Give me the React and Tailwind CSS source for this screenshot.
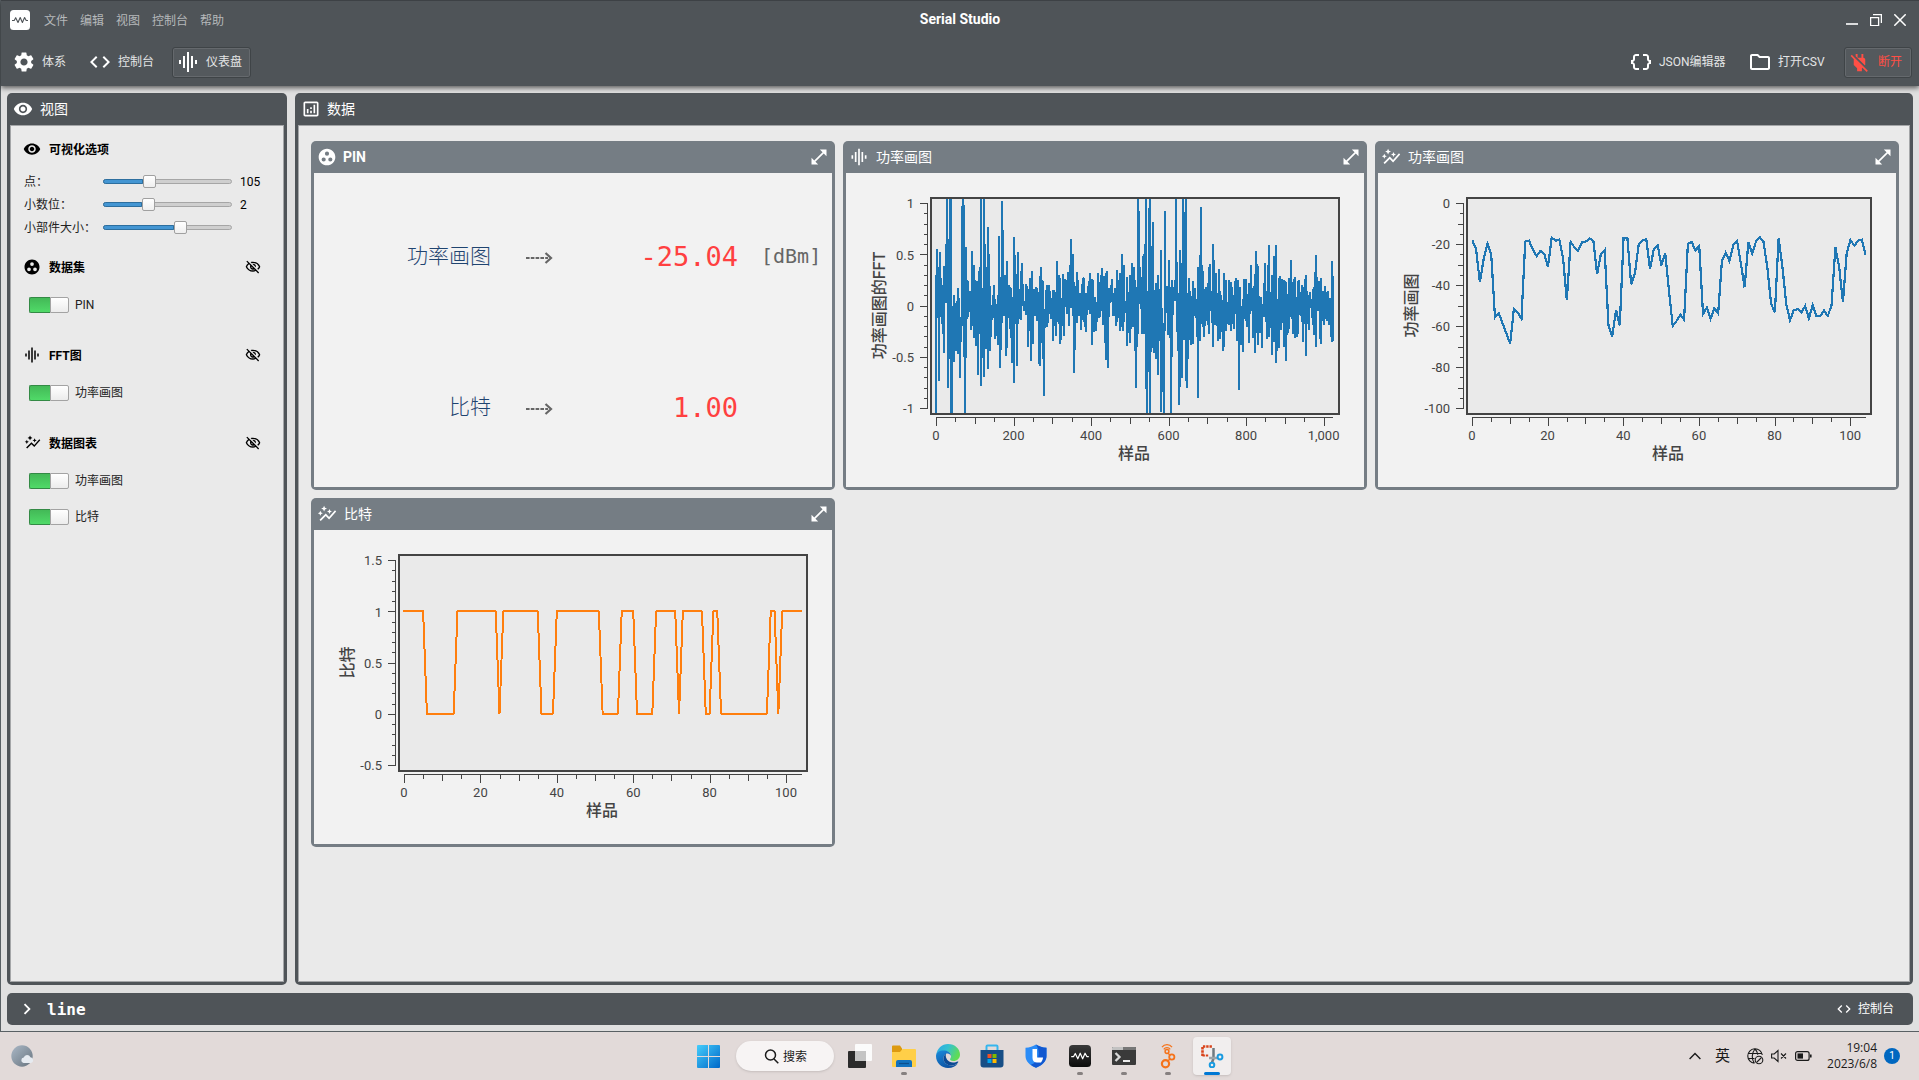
import React from "react";
import {
  MdVisibility,
  MdOutlineVisibilityOff,
  MdSettings,
  MdCode,
  MdDataObject,
  MdOutlineFolder,
  MdPowerOff,
  MdGroupWork,
  MdAutoGraph,
  MdGraphicEq,
  MdOutlineAnalytics,
  MdOpenInFull,
  MdChevronRight,
} from "react-icons/md";

const AXIS = "#444444";
const BLUE = "#1f77b4";
const ORANGE = "#ff7f0e";

/* Spectrum envelope: [x, y] steps, in thirds of a pixel */
const FFT_TOP_A = "30 255 33 177 39 231 42 186 48 264 51 285 54 228 60 162 63 26 69 147 72 26 81 348 84 315 90 339 93 333 96 294 102 324 105 381 108 48 111 26 117 45 120 171 126 270 129 273 132 303 138 183 144 225 150 270 153 273 159 243 162 231 165 26 171 294 174 26 180 162 183 231 186 111 192 192 195 288 198 345 201 315 204 285 210 327 213 342 216 315 219 138 225 261 228 33 234 120 237 255 243 213 249 285 255 291 258 294 261 321 264 141 270 195 273 252 276 186 282 297 285 243 288 219 294 282 297 333 300 282 306 288 309 297 312 264 318 243 324 297 330 291 336 294 339 306 342 258 345 231 351 270 354 273 357 357 360 300 363 285 375 303 378 324 381 300 390 306 393 213 399 255 405 264 408 324 411 252 417 267 423 270 426 246 432 225 435 147 441 192 447 276 450 288 453 246 459 270 462 309 468 282 471 264 474 261 477 264 480 309 486 288 489 273 492 249 498 267 504 270 507 321 513 336 516 249 522 276 525 255 528 234 534 258 540 249 543 243 549 294 555 285 558 267 564 309 567 294 573 240 579 270 582 249 588 192 594 225 600 333 603 261 609 306 612 255 618 219 624 231";
const FFT_TOP_B = "0 270 3 291 6 26 12 63 15 231 18 261 21 198 24 192 27 162 30 26 36 303 39 54 42 26 48 168 51 96 57 300 60 279 66 255 72 297 75 180 81 354 84 399 87 63 93 288 99 210 105 291 108 270 114 291 117 270 120 26 126 216 129 309 132 180 138 219 141 26 147 66 150 26 156 309 159 264 165 303 168 318 171 273 177 294 183 327 186 231 192 195 195 51 201 225 204 243 207 297 210 291 216 279 219 231 222 222 228 303 231 162 237 210 240 249 246 309 249 237 255 303 258 315 261 330 264 249 270 270 276 336 279 270 285 276 291 291 294 315 297 273 300 264 306 270 312 291 318 348 321 327 324 267 336 312 339 279 345 225 351 294 354 288 357 252 360 183 366 222 369 228 372 318 375 321 381 342 384 279 387 219 393 303 396 225 399 165 405 306 408 255 414 198 420 165 426 327 429 264 432 258 438 267 444 270 450 273 453 276 456 312 459 264 465 210 471 276 474 267 477 261 483 321 486 273 489 270 495 306 498 285 504 291 507 267 510 255 516 303 519 315 522 306 528 327 531 297 534 291 537 246 540 195 546 261 549 273 555 264 561 303 567 288 573 306 576 303 582 324 588 213 594 258";
const FFT_BOTTOM_A = "30 669 36 384 39 573 45 381 48 402 51 432 54 489 60 339 66 594 72 507 75 669 84 516 90 483 96 492 102 564 108 456 111 408 114 501 117 669 123 504 126 387 129 381 132 366 135 420 141 408 144 444 150 468 156 555 162 432 165 588 171 504 174 561 180 477 186 537 192 483 198 441 201 390 204 384 207 447 213 438 216 465 222 534 228 480 231 399 234 378 240 498 246 474 249 384 252 417 255 444 258 519 264 579 270 402 273 528 279 402 282 387 285 390 291 348 294 363 300 375 306 471 312 423 315 513 321 462 327 378 333 393 339 522 342 528 348 459 351 507 354 618 360 414 363 411 369 399 372 372 375 387 381 453 387 408 390 438 396 396 399 402 402 462 408 450 411 408 414 438 420 351 423 372 429 408 435 354 441 378 444 549 450 480 453 399 459 378 465 420 471 390 474 396 477 411 480 426 486 375 489 360 492 372 498 465 504 426 510 423 516 396 519 384 525 381 528 363 531 405 537 459 540 510 546 534 552 381 555 339 558 336 561 378 570 408 576 396 579 384 582 423 588 411 591 423 597 397 600 369 603 468 609 429 612 459 618 417 621 411 627 483";
const FFT_BOTTOM_B = "0 594 6 471 9 432 12 342 15 357 18 432 30 597 33 669 39 546 42 669 48 486 51 474 54 489 60 507 66 555 72 453 75 666 81 606 84 669 90 423 93 369 96 435 102 444 105 669 111 501 114 375 117 333 123 426 126 483 129 645 135 591 138 564 144 450 150 573 153 594 159 507 162 450 165 465 171 462 177 378 180 384 183 441 186 624 192 453 198 402 201 411 204 441 210 408 213 393 216 405 219 432 225 363 228 399 231 471 237 405 243 408 246 453 252 447 258 426 261 483 267 471 270 423 276 402 279 405 285 423 291 402 294 417 300 372 303 453 309 600 315 465 321 486 327 387 330 393 333 411 339 459 345 372 348 363 351 444 357 489 363 429 366 465 372 429 378 474 384 381 390 396 393 447 399 441 405 414 408 495 414 456 420 519 426 483 429 474 435 420 441 399 444 471 450 513 456 435 459 429 462 417 465 381 468 387 471 432 477 444 483 441 489 432 492 375 495 378 498 396 501 456 507 402 510 498 516 402 519 420 525 354 528 384 531 405 534 435 540 471 546 363 552 447 555 462 561 393 564 405 570 387 573 393 579 405 585 441 588 456 594 453";

function parseSteps(first, second) {
  const read = (text, shift) => {
    const n = text.split(" ").map(Number);
    const out = [];
    for (let i = 0; i < n.length; i += 2) out.push([n[i] + shift, n[i + 1]]);
    return out;
  };
  return [...read(first, 0), ...read(second, 630)];
}

function stepPoints(steps, end) {
  const pts = [];
  steps.forEach(([x, y], i) => {
    const next = i + 1 < steps.length ? steps[i + 1][0] : end;
    pts.push([x, y], [next, y]);
  });
  return pts;
}

const FFT_POINTS = [
  ...stepPoints(parseSteps(FFT_TOP_A, FFT_TOP_B), 1227),
  ...stepPoints(parseSteps(FFT_BOTTOM_A, FFT_BOTTOM_B), 1227).reverse(),
]
  .map(([x, y]) => `${(x / 3 + 79).toFixed(2)},${(y / 3 + 17).toFixed(2)}`)
  .join(" ");

const POWER = [
  331, 357, 457, 388, 341, 372, 562, 549, 580, 610, 640, 537, 547, 566, 335, 332, 358, 378, 363, 371, 411, 323, 332,
  329, 385, 511, 335, 352, 362, 337, 335, 326, 332, 433, 372, 360, 585, 620, 540, 586, 323, 323, 463, 430, 343, 332,
  327, 417, 357, 345, 406, 369, 482, 588, 573, 554, 569, 341, 336, 361, 347, 552, 533, 566, 535, 550, 393, 368, 393,
  345, 333, 400, 472, 336, 370, 335, 321, 336, 412, 521, 547, 325, 410, 522, 570, 541, 537, 548, 528, 565, 525, 558,
  558, 542, 558, 525, 352, 410, 517, 369, 330, 347, 332, 329, 374,
];
const POWER_POINTS = POWER.map((y, i) => `${(94.3 + i * 3.782).toFixed(2)},${(y / 3 - 43).toFixed(2)}`).join(" ");

const BIT_RUNS = [6, 8, 11, 1, 10, 4, 12, 5, 4, 5, 6, 1, 6, 2, 2, 13, 2, 1, 6];
const BIT_POINTS = BIT_RUNS.flatMap((n, i) => Array(n).fill(i % 2 === 0 ? 81 : 184))
  .map((y, i) => `${(90 + i * 3.82).toFixed(2)},${y}`)
  .join(" ");

function Chart({ box, axisX, x0, xUnit, xMax, xStep, xLabels, yLabels, yDiv, xTitle, xTitleX, yTitle, yTitleX, children }) {
  const top = 30.5;
  const span = 205;
  const yGap = span / (yLabels.length - 1);
  const xTicks = [];
  for (let i = 0; i * (xStep / 4) <= xMax; i++) xTicks.push(i);
  const yTicks = [];
  for (let i = 0; i <= (yLabels.length - 1) * yDiv; i++) yTicks.push(i);
  const [left, right] = box;
  return (
    <svg width="518" height="314" viewBox="0 0 518 314" className="block font-[Roboto,'Noto_Sans_CJK_SC',sans-serif]">
      <rect x={left + 1} y="25" width={right - left - 2} height="216" fill="#eaeaea" stroke={AXIS} strokeWidth="2" />
      <g shapeRendering="crispEdges">{children}</g>
      <g stroke={AXIS} strokeWidth="1" shapeRendering="crispEdges">
        <line x1={axisX} x2={axisX} y1={top - 0.5} y2={top + span + 0.5} />
        {yTicks.map((i) => {
          const y = Math.floor(top + (i * yGap) / yDiv) + 0.5;
          const len = i % yDiv === 0 ? 8 : yDiv === 4 && i % 2 === 0 ? 6 : 4;
          return <line key={i} x1={axisX - len} x2={axisX} y1={y} y2={y} />;
        })}
        <line x1={x0 - 0.5} x2={x0 + xMax * xUnit} y1="244.5" y2="244.5" />
        {xTicks.map((i) => {
          const x = Math.floor(x0 + i * (xStep / 4) * xUnit) + 0.5;
          const len = i % 4 === 0 ? 8.5 : i % 2 === 0 ? 6.5 : 4.5;
          return <line key={i} x1={x} x2={x} y1="244.5" y2={244.5 + len} />;
        })}
      </g>
      <g fill={AXIS} fontSize="13">
        {yLabels.map((t, i) => (
          <text key={t} x={axisX - 13.5} y={top + i * yGap + 4.8} textAnchor="end">
            {t}
          </text>
        ))}
        {xLabels.map((t, i) => (
          <text key={t} x={x0 - 0.5 + i * xStep * xUnit} y="267.3" textAnchor="middle">
            {t}
          </text>
        ))}
      </g>
      <g fill={AXIS} fontSize="16" fontWeight="500" textAnchor="middle">
        <text x={xTitleX} y="286">
          {xTitle}
        </text>
        <text transform={`translate(${yTitleX + 6} 132.500) rotate(-90)`}>{yTitle}</text>
      </g>
    </svg>
  );
}

function Widget({ icon, title, bold, children }) {
  return (
    <section className="flex h-[349px] w-[524px] flex-col rounded-[5px] bg-[#757d84] px-[3px] pb-[3px]">
      <header className="flex h-8 shrink-0 items-center pr-[3px] pl-[3px] text-white">
        <span className="flex w-5 justify-center">{icon}</span>
        <span
          className={
            bold ? "ml-[6px] flex-1 text-[14px] leading-none font-bold" : "ml-[7px] flex-1 text-[14px] leading-none"
          }
        >
          {title}
        </span>
        <MdOpenInFull size={20} />
      </header>
      <div className="flex-1 bg-[#f2f2f2]">{children}</div>
    </section>
  );
}

function DatasetRow({ name, value, unit }) {
  return (
    <div className="flex h-[151px] items-center leading-none">
      <span className="mt-px w-[177px] text-right text-[21px] font-light whitespace-nowrap text-[#1f4470]">{name}</span>
      <svg width="28" height="14" viewBox="0 0 28 14" className="mt-[4px] ml-[34px]" fill="none" stroke="#666">
        <path d="M1 7h22" strokeWidth="2" strokeDasharray="3.600 1.200" />
        <path d="M20.500 2l5.500 5-5.500 5" strokeWidth="2.200" />
      </svg>
      <span className="mt-px w-[185px] text-right font-['DejaVu_Sans_Mono',monospace] text-[27px] text-[#ff4040]">{value}</span>
      <span className="ml-[23px] font-['DejaVu_Sans_Mono',monospace] text-[20px] text-[#666]">{unit}</span>
    </div>
  );
}

function Slider({ label, fill, value }) {
  return (
    <div className="flex h-[23px] items-center text-[12px] leading-none text-[#222]">
      <span className="w-[79px] whitespace-nowrap">{label}</span>
      <div className="relative flex h-[5px] w-[129px] rounded-sm border border-[#a6a6a6] bg-[#cfcfcf]">
        <div className="-m-px h-[5px] rounded-l-sm border border-[#2d6f9f] bg-[#4496d3]" style={{ width: fill }} />
        <div
          className="absolute -top-[5px] h-[13px] w-[13px] rounded-[2px] border border-[#a0a0a0] bg-gradient-to-b from-white to-[#efefef]"
          style={{ left: fill - 1 }}
        />
      </div>
      <span className="ml-2 text-black">{value}</span>
    </div>
  );
}

function SideHeader({ icon, title }) {
  return (
    <div className="flex h-[41px] items-center text-black">
      <span className="flex w-4 justify-center">{icon}</span>
      <span className="mt-[2px] ml-[9px] flex-1 text-[12px] leading-none font-bold">{title}</span>
      <MdOutlineVisibilityOff size={16} className="mr-[22px]" />
    </div>
  );
}

function Toggle({ label }) {
  return (
    <div className="flex h-9 items-center pl-[5px]">
      <div className="flex h-4 w-10">
        <div className="w-[21px] rounded-l-[2px] border border-r-0 border-[#338a45] bg-gradient-to-b from-[#43b957] to-[#50da68]" />
        <div className="w-[19px] rounded-r-[2px] border border-[#a3a3a3] bg-gradient-to-b from-white to-[#ececec]" />
      </div>
      <span className="ml-[6px] text-[12px] leading-none text-[#222]">{label}</span>
    </div>
  );
}

function WaveLogo({ size, dark }) {
  return (
    <svg width={size} height={size} viewBox="0 0 20 20">
      <defs>
        <linearGradient id="logoDark" x1="0" y1="0" x2="0" y2="1">
          <stop offset="0" stopColor="#3a3a3a" />
          <stop offset="1" stopColor="#0c0c0c" />
        </linearGradient>
      </defs>
      <rect width="20" height="20" rx="3.500" fill={dark ? "url(#logoDark)" : "#ffffff"} />
      <path
        d="M2 10.500h2.200l1.500-2.800 2.300 4.800 2.200-5 2.200 5 2.200-5 1.600 3H18"
        fill="none"
        stroke={dark ? "#ffffff" : "#4f5458"}
        strokeWidth="1.100"
        strokeLinejoin="round"
      />
    </svg>
  );
}

function TaskSlot({ children, running, active }) {
  return (
    <div className="flex w-11 justify-center">
      <div
        className={
          active
            ? "relative flex h-[38px] w-[38px] items-center justify-center rounded bg-[#f1eeee] shadow-sm"
            : "relative flex h-[38px] w-[38px] items-center justify-center"
        }
      >
        {children}
        {running && <span className="absolute bottom-0 left-4 h-[3px] w-[6px] rounded-full bg-[#868080]" />}
        {active && <span className="absolute bottom-0 left-[11px] h-[3px] w-4 rounded-full bg-[#0078d4]" />}
      </div>
    </div>
  );
}

function StartIcon() {
  return (
    <svg width="23" height="23" viewBox="0 0 23 23">
      <defs>
        <linearGradient id="win" x1="0" y1="0" x2="1" y2="1">
          <stop offset="0" stopColor="#45cdfb" />
          <stop offset="1" stopColor="#0067c8" />
        </linearGradient>
      </defs>
      <path d="M1 0h10v11H0V1a1 1 0 0 1 1-1zM12 0h10a1 1 0 0 1 1 1v10H12zM0 12h11v11H1a1 1 0 0 1-1-1zM12 12h11v10a1 1 0 0 1-1 1H12z" fill="url(#win)" />
    </svg>
  );
}

function TaskViewIcon() {
  return (
    <svg width="24" height="24" viewBox="0 0 24 24">
      <rect x="7" y="0" width="17" height="17" rx="1" fill="#fbfbfb" />
      <rect x="0" y="7" width="18" height="17" rx="1" fill="#2b2b2b" />
      <path d="M7 7h11v10H7z" fill="#c4c4c4" />
    </svg>
  );
}

function ExplorerIcon() {
  return (
    <svg width="24" height="24" viewBox="0 0 24 24">
      <path d="M0 2.500A1 1 0 0 1 1 1.500h7l2 3v4H0z" fill="#dd9a10" />
      <path d="M0 8h8l2.500-3H23a1 1 0 0 1 1 1v16a1 1 0 0 1-1 1H1a1 1 0 0 1-1-1z" fill="#ffcf48" />
      <path d="M4 23v-5a2 2 0 0 1 2-2h12a2 2 0 0 1 2 2v5z" fill="#1272bf" />
      <path d="M7 19.500h10" stroke="#0b4f8e" strokeWidth="1.300" />
    </svg>
  );
}

function EdgeIcon() {
  return (
    <svg width="24" height="24" viewBox="0 0 24 24">
      <defs>
        <linearGradient id="edgeTop" x1="0" y1="0" x2="1" y2="0.400">
          <stop offset="0" stopColor="#2aa5e8" />
          <stop offset="0.500" stopColor="#35c1d0" />
          <stop offset="1" stopColor="#5fdc55" />
        </linearGradient>
        <linearGradient id="edgeBody" x1="0" y1="0" x2="0.600" y2="1">
          <stop offset="0" stopColor="#1b8bdc" />
          <stop offset="1" stopColor="#0c50a0" />
        </linearGradient>
      </defs>
      <path d="M0.200 11C1 4.500 6 0 12 0c7 0 12 5 12 10.500 0 4-3 6.500-6.500 6.500-3 0-4-1.200-3.200-2.500.700-1 .700-1.800.700-2.500 0-3-3-5-6.500-5C4.500 7 1 9 .200 11z" fill="url(#edgeTop)" />
      <path d="M0 12c0-3.500 3.500-5.500 7.500-5.500 4 0 7.500 2 7.500 5.500C14.500 10.500 13 9.500 11.500 9.500 9 9.500 7.500 12 7.500 14.500c0 4 3.500 7 8 7 2.200 0 4.500-.8 6.500-2.300C20 22 16.500 24 12 24 5.400 24 0 18.600 0 12z" fill="url(#edgeBody)" />
      <path d="M7.500 14.500c0-2 1-3.800 2.500-4.700C8.800 14 12 18.500 17 18.500c2 0 3.500-.5 4.700-1 .5-.2.800.3.500.8C20.500 20.500 18 21.500 15.500 21.500c-4.500 0-8-3-8-7z" fill="#0b4a94" />
    </svg>
  );
}

function StoreIcon() {
  return (
    <svg width="24" height="24" viewBox="0 0 24 24">
      <path d="M6.500 6V2.500a1 1 0 0 1 1-1h9a1 1 0 0 1 1 1V6" fill="none" stroke="#35b5ee" strokeWidth="2" />
      <path d="M.5 6h23v14.500a3 3 0 0 1-3 3h-17a3 3 0 0 1-3-3z" fill="#174e86" />
      <path d="M7.500 10h4v4h-4z" fill="#f25022" />
      <path d="M12.500 10h4v4h-4z" fill="#7fba00" />
      <path d="M7.500 15h4v4h-4z" fill="#00a4ef" />
      <path d="M12.500 15h4v4h-4z" fill="#ffb900" />
    </svg>
  );
}

function ShieldIcon() {
  return (
    <svg width="22" height="24" viewBox="0 0 22 24">
      <path d="M11 0.500c3 2 6.500 3 10.500 3.200V12c0 5.500-4.500 9.500-10.500 11.800C5 21.500.5 17.500.5 12V3.700C4.500 3.500 8 2.500 11 .5z" fill="#2b8cf7" />
      <path d="M11 .5c3 2 6.500 3 10.500 3.200V12c0 5.500-4.500 9.500-10.500 11.800-2-.8-3.800-1.800-5.200-3C14 18 16 8 11 .5z" fill="#1258d0" />
      <path d="M7.500 5v9c0 3 2 4.500 4.500 4.500h4c1.500-2 2-4 2-5H12V5z" fill="#ffffff" />
    </svg>
  );
}

function TerminalIcon() {
  return (
    <svg width="24" height="20" viewBox="0 0 24 20">
      <rect x="0" y="1" width="24" height="18" rx="1" fill="#3a3a3a" />
      <path d="M0 2a1 1 0 0 1 1-1h10v3H0z" fill="#c2c2c2" />
      <path d="M11 1h12a1 1 0 0 1 1 1v2H11z" fill="#777777" />
      <path d="M3.500 7l4 4-4 4" fill="none" stroke="#d9d9d9" strokeWidth="2.300" />
      <path d="M11 15h7" stroke="#ffffff" strokeWidth="1.800" />
    </svg>
  );
}

function NodesIcon() {
  return (
    <svg width="16" height="26" viewBox="0 0 16 26" fill="none" stroke="#f5731b">
      <path d="M2 4.200c2.500-3.500 7.500-3.500 10 0M3.800 6.300c1.500-2.200 4.900-2.200 6.400 0" strokeWidth="1.300" />
      <circle cx="7" cy="8.500" r="1.900" strokeWidth="1.500" />
      <circle cx="11.800" cy="14" r="2.600" strokeWidth="1.800" />
      <circle cx="5.500" cy="20.800" r="3.600" strokeWidth="2.200" />
      <path d="M8 10.200l2.200 2M9.900 16l-2 2" strokeWidth="1.500" />
    </svg>
  );
}

function SnipIcon() {
  return (
    <svg width="24" height="24" viewBox="0 0 24 24" fill="none">
      <path d="M2.500 12V2.500H12" stroke="#d9431a" strokeWidth="2.600" strokeDasharray="2.400 0.900" />
      <path d="M2.500 11.500H9" stroke="#d9431a" strokeWidth="2.200" strokeDasharray="2.400 0.900" />
      <path d="M13.500 4v10.500l-1.500 4" stroke="#6f7a80" strokeWidth="2.500" />
      <path d="M9 14h8.500" stroke="#9ba3a8" strokeWidth="2.500" />
      <circle cx="20" cy="13" r="2.400" stroke="#1a9be0" strokeWidth="2" />
      <circle cx="12" cy="21" r="2.300" stroke="#1a9be0" strokeWidth="2" />
    </svg>
  );
}

function WeatherIcon() {
  return (
    <svg width="24" height="24" viewBox="0 0 24 24">
      <defs>
        <linearGradient id="moon" x1="0" y1="0" x2="1" y2="1">
          <stop offset="0" stopColor="#aab8c6" />
          <stop offset="1" stopColor="#68747f" />
        </linearGradient>
      </defs>
      <circle cx="11" cy="12" r="10.700" fill="url(#moon)" />
      <path d="M12.500 19a2.800 2.800 0 0 1 .2-5.500 3.600 3.600 0 0 1 6.700-.2A2.900 2.900 0 0 1 20 19z" fill="#e6ebf1" />
    </svg>
  );
}

export default function App() {
  return (
    <div className="flex h-[1080px] w-[1919px] flex-col overflow-hidden bg-[#e0e0e0] font-[Roboto,'Noto_Sans_CJK_SC',sans-serif]">
      <div className="flex h-[1032px] flex-col border-b border-l border-[#596064]">
        <header className="z-10 flex h-[86px] shrink-0 flex-col border-t border-[#3d4145] bg-[#4f5458] shadow-[0_2px_5px_rgba(0,0,0,0.6)]">
          <div className="grid h-[37px] grid-cols-3 items-center">
            <div className="flex items-center pl-[9px]">
              <WaveLogo size={20} />
              <nav className="mt-[2px] ml-[14px] flex gap-3 text-[12px] leading-none text-[#b5b8ba]">
                <span>文件</span>
                <span>编辑</span>
                <span>视图</span>
                <span>控制台</span>
                <span>帮助</span>
              </nav>
            </div>
            <h1 className="-mt-[2px] text-center text-[14px] leading-none font-bold text-white">Serial Studio</h1>
            <div className="flex justify-end gap-3 pr-[13px]">
              <svg width="12" height="12" viewBox="0 0 12 12" stroke="#fff" fill="none">
                <path d="M0 10h12" strokeWidth="1.600" />
              </svg>
              <svg width="12" height="12" viewBox="0 0 12 12" stroke="#fff" fill="none">
                <path d="M.6 3.600h8v8h-8zM3 .6h8.400V9" strokeWidth="1.300" />
              </svg>
              <svg width="12" height="12" viewBox="0 0 12 12" stroke="#fff" fill="none">
                <path d="M.3.300l11.400 11.400M11.700.300L.3 11.700" strokeWidth="1.500" />
              </svg>
            </div>
          </div>
          <div className="flex h-[48px] items-center text-[12px] leading-none text-[#e4e5e6]">
            <div className="flex items-center pl-[11px]">
              <MdSettings size={24} color="#fff" />
              <span className="ml-[6px]">体系</span>
            </div>
            <div className="flex items-center pl-[22px]">
              <MdCode size={24} color="#fff" />
              <span className="ml-[6px]">控制台</span>
            </div>
            <div className="ml-[18px] flex h-[31px] w-[79px] items-center rounded-[3px] border border-[#3f4447] bg-[#54595d] pl-[3px] shadow-[inset_0_0_0_1px_#65696d]">
              <MdGraphicEq size={24} color="#fff" className="shrink-0" />
              <span className="ml-[6px] whitespace-nowrap">仪表盘</span>
            </div>
            <div className="flex-1" />
            <div className="flex w-[119px] items-center">
              <MdDataObject size={24} color="#fff" />
              <span className="ml-[6px]">JSON编辑器</span>
            </div>
            <div className="flex w-[96px] items-center">
              <MdOutlineFolder size={24} color="#fff" />
              <span className="ml-[6px]">打开CSV</span>
            </div>
            <div className="mr-[7px] flex h-[31px] w-[68px] items-center rounded-[3px] border border-[#3f4447] bg-[#54595d] pl-[3px] text-[#ff4f45] shadow-[inset_0_0_0_1px_#65696d]">
              <MdPowerOff size={23} />
              <span className="ml-[7px]">断开</span>
            </div>
          </div>
        </header>

        <main className="mt-[7px] flex h-[892px] gap-2 px-[6px]">
          <aside className="flex w-[280px] flex-col rounded-[5px] bg-[#4f5458] px-[3px] pb-[3px]">
            <header className="flex h-8 shrink-0 items-center pl-[3px] text-white">
              <MdVisibility size={20} />
              <span className="ml-[7px] text-[14px] leading-none">视图</span>
            </header>
            <div className="flex-1 border border-[#a4a6a8] bg-[#eaeaea] pl-[13px]">
              <div className="flex h-[44px] items-center pt-[2px] text-black">
                <MdVisibility size={18} className="-ml-px" />
                <span className="mt-px ml-[8px] text-[12px] leading-none font-bold">可视化选项</span>
              </div>
              <div>
                <Slider label="点：" fill={40} value="105" />
                <Slider label="小数位：" fill={39} value="2" />
                <Slider label="小部件大小：" fill={71} value="" />
              </div>
              <div className="mt-[7px]">
                <SideHeader icon={<MdGroupWork size={18} className="shrink-0" />} title="数据集" />
                <Toggle label="PIN" />
              </div>
              <div className="mt-[11px]">
                <SideHeader icon={<MdGraphicEq size={18} className="shrink-0" />} title="FFT图" />
                <Toggle label="功率画图" />
              </div>
              <div className="mt-[11px]">
                <SideHeader icon={<MdAutoGraph size={17} className="shrink-0" />} title="数据图表" />
                <Toggle label="功率画图" />
                <Toggle label="比特" />
              </div>
            </div>
          </aside>

          <section className="flex w-[1618px] flex-col rounded-[5px] bg-[#4f5458] px-[3px] pb-[3px]">
            <header className="flex h-8 shrink-0 items-center pl-[3px] text-white">
              <MdOutlineAnalytics size={20} />
              <span className="ml-[6px] text-[14px] leading-none">数据</span>
            </header>
            <div className="flex flex-1 flex-wrap content-start gap-2 border border-[#a4a6a8] bg-[#eaeaea] pt-[15px] pl-[12px]">
              <Widget icon={<MdGroupWork size={20} />} title="PIN" bold>
                <div className="pt-[7px]">
                  <DatasetRow name="功率画图" value="-25.04" unit="[dBm]" />
                  <DatasetRow name="比特" value="1.00" unit="" />
                </div>
              </Widget>
              <Widget icon={<MdGraphicEq size={20} />} title="功率画图">
                <Chart
                  box={[84, 494]}
                  axisX={81.5}
                  x0={90.5}
                  xUnit={0.3876}
                  xMax={1024}
                  xStep={200}
                  xLabels={["0", "200", "400", "600", "800", "1,000"]}
                  yLabels={["1", "0.5", "0", "-0.5", "-1"]}
                  yDiv={5}
                  xTitle="样品"
                  xTitleX={288}
                  yTitle="功率画图的FFT"
                  yTitleX={33}
                >
                  <polygon points={FFT_POINTS} fill={BLUE} />
                </Chart>
              </Widget>
              <Widget icon={<MdAutoGraph size={20} />} title="功率画图">
                <Chart
                  box={[88, 494]}
                  axisX={85.5}
                  x0={94.5}
                  xUnit={3.782}
                  xMax={104}
                  xStep={20}
                  xLabels={["0", "20", "40", "60", "80", "100"]}
                  yLabels={["0", "-20", "-40", "-60", "-80", "-100"]}
                  yDiv={4}
                  xTitle="样品"
                  xTitleX={290}
                  yTitle="功率画图"
                  yTitleX={33}
                >
                  <polyline points={POWER_POINTS} fill="none" stroke={BLUE} strokeWidth="2.2" />
                </Chart>
              </Widget>
              <Widget icon={<MdAutoGraph size={20} />} title="比特">
                <Chart
                  box={[84, 494]}
                  axisX={81.5}
                  x0={90.5}
                  xUnit={3.82}
                  xMax={104}
                  xStep={20}
                  xLabels={["0", "20", "40", "60", "80", "100"]}
                  yLabels={["1.5", "1", "0.5", "0", "-0.5"]}
                  yDiv={5}
                  xTitle="样品"
                  xTitleX={288}
                  yTitle="比特"
                  yTitleX={33}
                >
                  <polyline
                    points={BIT_POINTS}
                    fill="none"
                    stroke={ORANGE}
                    strokeWidth="2"
                    strokeLinejoin="bevel"
                    strokeLinecap="square"
                  />
                </Chart>
              </Widget>
            </div>
          </section>
        </main>

        <footer className="mx-[6px] mt-2 flex h-8 w-[1906px] items-center rounded-[5px] bg-[#4f5458] pr-[19px] pl-[9px] text-white">
          <MdChevronRight size={22} />
          <span className="mt-px ml-[9px] flex-1 font-['DejaVu_Sans_Mono',monospace] text-[16px] leading-none font-bold">line</span>
          <MdCode size={16} />
          <span className="ml-[6px] text-[12px] leading-none">控制台</span>
        </footer>
      </div>

      <div className="flex h-12 items-center bg-[#e2dad9] text-[#1b1b1b]">
        <div className="w-[686px] pl-[11px]">
          <WeatherIcon />
        </div>
        <TaskSlot>
          <StartIcon />
        </TaskSlot>
        <div className="ml-[6px] flex h-[30px] w-[98px] items-center rounded-full bg-[#f7f4f4] pl-[28px] shadow-sm">
          <svg width="15" height="15" viewBox="0 0 15 15" fill="none" stroke="#1b1b1b" strokeWidth="1.500">
            <circle cx="6.500" cy="6" r="5" />
            <path d="M10 10l4.300 4.300" />
          </svg>
          <span className="mt-px ml-[4px] text-[12px] leading-none">搜索</span>
        </div>
        <div className="ml-1 flex">
          <TaskSlot>
            <TaskViewIcon />
          </TaskSlot>
          <TaskSlot running>
            <ExplorerIcon />
          </TaskSlot>
          <TaskSlot>
            <EdgeIcon />
          </TaskSlot>
          <TaskSlot>
            <StoreIcon />
          </TaskSlot>
          <TaskSlot>
            <ShieldIcon />
          </TaskSlot>
          <TaskSlot running>
            <WaveLogo size={22} dark />
          </TaskSlot>
          <TaskSlot running>
            <TerminalIcon />
          </TaskSlot>
          <TaskSlot running>
            <NodesIcon />
          </TaskSlot>
          <TaskSlot active>
            <SnipIcon />
          </TaskSlot>
        </div>
        <div className="flex-1" />
        <div className="flex items-center pr-[19px]">
          <svg width="12" height="8" viewBox="0 0 12 8" fill="none" stroke="#1b1b1b" strokeWidth="1.400">
            <path d="M.6 7L6 1.500 11.400 7" />
          </svg>
          <span className="mt-px ml-[14px] text-[15px] leading-none">英</span>
          <svg width="17" height="17" viewBox="0 0 17 17" fill="none" stroke="#1b1b1b" strokeWidth="1.100" className="ml-[17px]">
            <path d="M15.300 7A7.300 7.300 0 1 0 7.500 15.300M1 5.500h14M1 10.500h6.500M8 1C4.500 5 4.500 11 7.300 15M8 1c1.800 1.800 2.600 3.600 2.800 5.700" />
            <circle cx="12" cy="12" r="3.800" />
            <path d="M9.500 14.500l5-5" />
          </svg>
          <svg width="16" height="14" viewBox="0 0 16 14" fill="none" stroke="#1b1b1b" strokeWidth="1.100" className="ml-[7px]">
            <path d="M.6 5v4h2.600L7 12.400V1.600L3.200 5zM10 4.500l5 5M15 4.500l-5 5" />
          </svg>
          <svg width="17" height="12" viewBox="0 0 17 12" fill="none" stroke="#1b1b1b" strokeWidth="1.200" className="ml-[8px]">
            <rect x=".6" y="1.600" width="13.500" height="8.800" rx="2" />
            <path d="M15.800 4.500v3" strokeWidth="1.600" />
            <path d="M2.500 3.400h5.500v5.200H2.500z" fill="#1b1b1b" stroke="none" />
          </svg>
          <div className="ml-[11px] w-[54px] text-right font-['Open_Sans',sans-serif] text-[12px] leading-4 whitespace-nowrap">
            <div>19:04</div>
            <div>2023/6/8</div>
          </div>
          <span className="ml-[7px] flex h-4 w-4 items-center justify-center rounded-full bg-[#0067c0] text-[10px] leading-none text-white">
            1
          </span>
        </div>
      </div>
    </div>
  );
}
